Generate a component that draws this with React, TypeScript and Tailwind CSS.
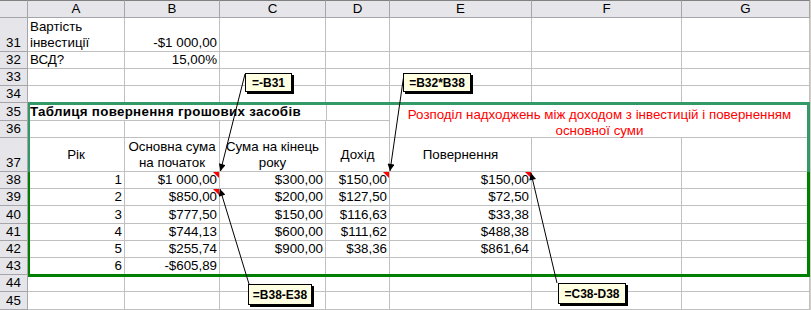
import type { ReactNode } from 'react';

const COLS = ['A', 'B', 'C', 'D', 'E', 'F', 'G'];

// plain worksheet cell: bottom aligned like Excel, unless told otherwise
function Cell({
  children,
  className = '',
  right = false,
  middle = false,
  note = false,
}: {
  children?: ReactNode;
  className?: string;
  right?: boolean;
  middle?: boolean;
  note?: boolean;
}) {
  return (
    <div
      className={`relative flex overflow-visible whitespace-nowrap border-b border-r border-[#c0c0c0] px-[2px] leading-[16px] ${
        middle ? 'items-center' : 'items-end'
      } ${right ? 'justify-end' : ''} ${className}`}
    >
      {children}
      {note && (
        <span className="absolute right-0 top-0 h-0 w-0 border-l-[6px] border-t-[6px] border-l-transparent border-t-[#ff0000]" />
      )}
    </div>
  );
}

function RowNo({ n }: { n: number }) {
  return (
    <div className="flex items-end justify-center border-b border-r border-[#a6a6aa] bg-[#e6e6ea] leading-[16px] text-black">
      {n}
    </div>
  );
}

function Callout({ text, className }: { text: string; className: string }) {
  return (
    <div
      className={`absolute flex items-center justify-center border border-black bg-[#ffffe1] text-[12px] font-bold leading-none text-black shadow-[2px_2px_0_0_#000] ${className}`}
    >
      {text}
    </div>
  );
}

const data = [
  { n: 38, year: '1', start: '$1 000,00', end: '$300,00', income: '$150,00', back: '$150,00' },
  { n: 39, year: '2', start: '$850,00', end: '$200,00', income: '$127,50', back: '$72,50' },
  { n: 40, year: '3', start: '$777,50', end: '$150,00', income: '$116,63', back: '$33,38' },
  { n: 41, year: '4', start: '$744,13', end: '$600,00', income: '$111,62', back: '$488,38' },
  { n: 42, year: '5', start: '$255,74', end: '$900,00', income: '$38,36', back: '$861,64' },
];

function EmptyRow({ n }: { n: number }) {
  return (
    <>
      <RowNo n={n} />
      {COLS.map((c) => (
        <Cell key={c} />
      ))}
    </>
  );
}

export default function App() {
  return (
    <div className="relative h-[310px] w-[811px] overflow-hidden bg-[#d4d0c8] font-['Liberation_Sans',Arial,sans-serif] text-[13.33px] text-black">
      <div className="grid w-[810px] grid-cols-[28px_97px_95px_106px_64px_142px_150px_128px] grid-rows-[18px_34px_17px_17px_17px_18px_17px_34px_17px_17px_18px_17px_17px_17px_17px_18px] bg-white">
        {/* column headers */}
        <div className="border-b border-r border-t border-[#a6a6aa] border-t-[#808080] bg-[#e6e6ea]" />
        {COLS.map((c) => (
          <div
            key={c}
            className="flex items-center justify-center border-b border-r border-t border-[#a6a6aa] border-t-[#808080] bg-[#e6e6ea] leading-[16px]"
          >
            {c}
          </div>
        ))}

        {/* 31 */}
        <RowNo n={31} />
        <Cell className="whitespace-normal">
          <span>
            Вартість
            <br />
            інвестиції
          </span>
        </Cell>
        <Cell right>-$1 000,00</Cell>
        <Cell />
        <Cell />
        <Cell />
        <Cell />
        <Cell />

        {/* 32 */}
        <RowNo n={32} />
        <Cell>ВСД?</Cell>
        <Cell right>15,00%</Cell>
        <Cell />
        <Cell />
        <Cell />
        <Cell />
        <Cell />

        <EmptyRow n={33} />
        <EmptyRow n={34} />

        {/* 35 */}
        <RowNo n={35} />
        <Cell className="col-span-3 border-r-0 font-bold tracking-[0.3px]">
          Таблиця повернення грошових засобів
        </Cell>
        <Cell className="border-l border-l-[#c0c0c0]" />
        <div className="col-span-3 row-span-2 flex items-center justify-center whitespace-normal border-b border-r border-[#c0c0c0] pt-[5px] text-center leading-[16px] text-[#ff0000]">
          <span>
            Розподіл надходжень між доходом з інвестицій і поверненням
            <br />
            основної суми
          </span>
        </div>

        {/* 36 */}
        <RowNo n={36} />
        <Cell />
        <Cell />
        <Cell />
        <Cell />

        {/* 37 */}
        <RowNo n={37} />
        <Cell middle className="justify-center">
          Рік
        </Cell>
        <Cell className="justify-center text-center">
          <span>
            Основна сума
            <br />
            на початок
          </span>
        </Cell>
        <Cell className="justify-center text-center">
          <span>
            Сума на кінець
            <br />
            року
          </span>
        </Cell>
        <Cell middle className="justify-center">
          Дохід
        </Cell>
        <Cell middle className="justify-center">
          Повернення
        </Cell>
        <Cell />
        <Cell />

        {data.map((r, i) => (
          <div key={r.n} className="contents">
            <RowNo n={r.n} />
            <Cell right>{r.year}</Cell>
            <Cell right note={i < 2}>
              {r.start}
            </Cell>
            <Cell right>{r.end}</Cell>
            <Cell right note={i === 0}>
              {r.income}
            </Cell>
            <Cell right note={i === 0}>
              {r.back}
            </Cell>
            <Cell />
            <Cell />
          </div>
        ))}

        {/* 43 */}
        <RowNo n={43} />
        <Cell right>6</Cell>
        <Cell right>-$605,89</Cell>
        <Cell />
        <Cell />
        <Cell />
        <Cell />
        <Cell />

        <EmptyRow n={44} />
        <EmptyRow n={45} />
      </div>

      {/* table outline */}
      <div className="pointer-events-none absolute left-[28px] top-[102px] h-[70px] w-[782px] border-l-2 border-r-[3px] border-t-[3px] border-[#339966]" />
      <div className="pointer-events-none absolute left-[28px] top-[172px] h-[105px] w-[782px] border-b-[3px] border-l-2 border-r-[3px] border-[#008000]" />

      {/* arrows from the formula notes */}
      <svg className="pointer-events-none absolute left-0 top-0" width="811" height="310">
        <defs>
          <marker
            id="ah"
            viewBox="0 0 10 10"
            refX="10"
            refY="5"
            markerWidth="8"
            markerHeight="7"
            markerUnits="userSpaceOnUse"
            orient="auto"
          >
            <path d="M0,0 L10,5 L0,10 z" fill="#000" />
          </marker>
        </defs>
        <g stroke="#000" strokeWidth="1" markerEnd="url(#ah)">
          <line x1="245" y1="74" x2="220.5" y2="171" />
          <line x1="404" y1="74" x2="390" y2="171" />
          <line x1="249" y1="284" x2="220" y2="189" />
          <line x1="557" y1="283" x2="531" y2="173" />
        </g>
      </svg>

      <Callout text="=-B31" className="left-[245px] top-[73px] h-[19px] w-[47px]" />
      <Callout text="=B32*B38" className="left-[403px] top-[73px] h-[19px] w-[68px]" />
      <Callout text="=B38-E38" className="left-[248px] top-[284px] h-[21px] w-[64px]" />
      <Callout text="=C38-D38" className="left-[558px] top-[283px] h-[21px] w-[68px]" />
    </div>
  );
}
